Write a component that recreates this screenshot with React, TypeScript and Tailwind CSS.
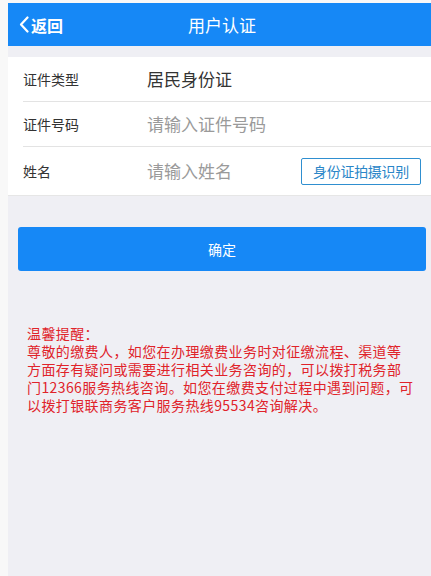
import React from "react";

const font = { fontFamily: '"Noto Sans CJK SC", "Noto Sans", sans-serif' };

export default function App() {
  return (
    <div
      className="w-[431px] h-[576px] overflow-hidden bg-[#f8f8f8] pl-[8px] pt-[3px] flex"
      style={font}
    >
      <div className="flex-1 bg-[#efeff4] flex flex-col">
        {/* Header */}
        <div className="relative h-[43px] bg-[#1688f6] flex items-center justify-center">
          <div className="absolute left-[10px] top-0 h-full flex items-center text-white">
            <svg width="12" height="17" viewBox="0 0 12 17" className="mr-[1px]">
              <path
                d="M9.5 1.5 L3 8.5 L9.5 15.5"
                fill="none"
                stroke="white"
                strokeWidth="2.2"
                strokeLinecap="round"
                strokeLinejoin="round"
              />
            </svg>
            <span className="text-[16px] font-bold leading-none">返回</span>
          </div>
          <span className="text-white text-[17px] leading-none ml-[5px]">用户认证</span>
        </div>

        {/* Form card */}
        <div className="mt-[11px] bg-white border-b border-[#e6e6e6]">
          <div className="ml-[15px] h-[45px] flex items-center border-b border-[#e3e3e3]">
            <span className="w-[124px] text-[14px] text-[#333]">证件类型</span>
            <span className="text-[17px] text-[#333]">居民身份证</span>
          </div>
          <div className="ml-[15px] h-[45px] flex items-center border-b border-[#e3e3e3]">
            <span className="w-[124px] text-[14px] text-[#333]">证件号码</span>
            <span className="text-[17px] text-[#9a9a9a]">请输入证件号码</span>
          </div>
          <div className="ml-[15px] h-[48px] flex items-center">
            <span className="w-[124px] text-[14px] text-[#333]">姓名</span>
            <span className="flex-1 text-[17px] text-[#9a9a9a]">请输入姓名</span>
            <div className="mr-[10px] w-[120px] h-[27px] border border-[#2f8fd0] rounded-[2px] flex items-center justify-center text-[14px] text-[#2a86c8] tracking-[-0.3px]">
              身份证拍摄识别
            </div>
          </div>
        </div>

        {/* Confirm button */}
        <div className="mt-[31px] ml-[10px] mr-[5px] h-[44px] bg-[#1688f6] rounded-[3px] flex items-center justify-center text-white text-[14px]">
          确定
        </div>

        {/* Warning */}
        <div className="mt-[53px] pl-[19px] text-[14px] leading-[18px] text-[#e0232a] tracking-[0.4px] whitespace-nowrap">
          <div>温馨提醒：</div>
          <div>尊敬的缴费人，如您在办理缴费业务时对征缴流程、渠道等</div>
          <div>方面存有疑问或需要进行相关业务咨询的，可以拨打税务部</div>
          <div>门12366服务热线咨询。如您在缴费支付过程中遇到问题，可</div>
          <div>以拨打银联商务客户服务热线95534咨询解决。</div>
        </div>
      </div>
    </div>
  );
}
